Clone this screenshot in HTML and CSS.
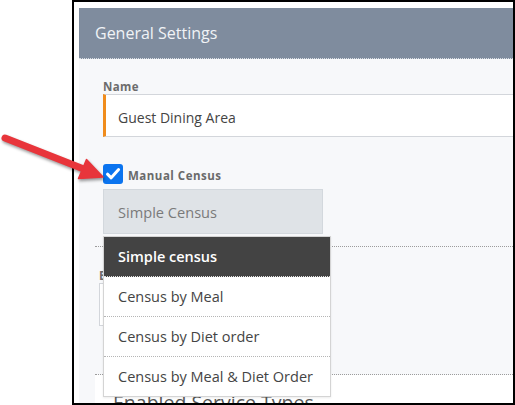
FILE: index.html
```html
<!DOCTYPE html>
<html>
<head>
<meta charset="utf-8">
<link rel="stylesheet" href="styles.css">
</head>
<body>
<div class="frame">
  <div class="header">General Settings</div>
  <div class="panel">
    <div class="sec sec1">
      <div class="label">Name</div>
      <div class="input">Guest Dining Area</div>
      <div class="check-row">
        <span class="checkbox"><svg width="20" height="20" viewBox="0 0 20 20"><path d="M4.5 10.2 L8.2 13.8 L15.6 5.6" fill="none" stroke="#fff" stroke-width="3" stroke-linecap="round" stroke-linejoin="round"/></svg></span>
        <span class="check-label">Manual Census</span>
      </div>
      <div class="select-wrap">
        <div class="select">Simple Census</div>
        <ul class="menu">
          <li class="active">Simple census</li>
          <li>Census by Meal</li>
          <li>Census by Diet order</li>
          <li>Census by Meal &amp; Diet Order</li>
        </ul>
      </div>
    </div>
    <div class="sec sec2">
      <div class="label">Base Census Type</div>
      <div class="input2"></div>
    </div>
    <div class="sec sec3">Enabled Service Types</div>
  </div>
</div>
<svg class="arrow" width="115" height="70" viewBox="0 125 115 70">
  <g fill="#e8353b" stroke="#e8353b">
    <line x1="5" y1="138" x2="85" y2="169.5" stroke-width="7" stroke-linecap="round"/>
    <polygon points="103,177 86.5,159.5 78.5,178.5" stroke-width="1.5" stroke-linejoin="round"/>
  </g>
</svg>
</body>
</html>
```
FILE: styles.css
```css
body {
  margin: 0;
  width: 515px;
  height: 405px;
  overflow: hidden;
  position: relative;
  background: #fff;
  font-family: "Open Sans", "Noto Sans", sans-serif;
}

.frame {
  margin-left: 72px;
  width: 443px;
  height: 405px;
  box-sizing: border-box;
  border: 2px solid #000;
  padding: 6px 0 0 5px;
  background: #fff;
  overflow: hidden;
}

.header {
  height: 50px;
  background: #7f8c9e;
  border-bottom: 1px dotted #d8dde3;
  padding-left: 16px;
  display: flex;
  align-items: center;
  color: #f1f3f6;
  font-size: 16px;
}

.panel {
  background: #f7f8fa;
  padding-left: 16px;
  height: 400px;
}

.sec1 {
  padding: 21px 0 12px 8px;
  border-bottom: 1px dotted #9c9c9c;
}

.label {
  font-size: 11.5px;
  line-height: 13px;
  font-weight: 700;
  color: #6c6c6c;
  letter-spacing: 0.4px;
}

.input {
  margin-top: 1px;
  box-sizing: content-box;
  background: #fff;
  border-top: 1px solid #d3d6db;
  border-bottom: 1px solid #d3d6db;
  border-left: 3px solid #f08c1c;
  padding-left: 12px;
  display: flex;
  align-items: center;
  font-size: 14px;
  padding-top: 3px;
  height: 38px;
  color: #444;
}

.check-row {
  margin-top: 27px;
  height: 20px;
  display: flex;
  align-items: center;
  gap: 5px;
}

.checkbox {
  width: 20px;
  height: 20px;
  background: #0b74ef;
  border-radius: 3px;
  display: block;
}

.checkbox svg { display: block; }

.check-label {
  font-size: 11.5px;
  font-weight: 700;
  color: #6a6a6a;
  letter-spacing: 0.5px;
  padding-top: 3px;
}

.select-wrap {
  position: relative;
  margin-top: 5px;
  width: 220px;
}

.select {
  height: 42px;
  padding-top: 1px;
  box-sizing: content-box;
  background: #dfe3e7;
  border: 1px solid #d3d8dd;
  padding-left: 14px;
  display: flex;
  align-items: center;
  font-size: 14.6px;
  color: #7a7a7a;
}

.menu {
  position: absolute;
  z-index: 5;
  left: 0;
  top: calc(100% + 2px);
  width: 226px;
  margin: 0;
  padding: 0;
  list-style: none;
  background: #fff;
  border: 1px solid #d4d4d4;
  box-shadow: 0 1px 2px rgba(0, 0, 0, 0.08);
}

.menu li {
  height: 39px;
  border-bottom: 1px dotted #b5b5b5;
  padding-left: 14px;
  display: flex;
  align-items: center;
  font-size: 14.5px;
  color: #444;
}

.menu li:last-child { border-bottom: none; }

.menu li.active {
  background: #434343;
  color: #fff;
  font-weight: 600;
  border-bottom-color: #e0e0e0;
}

.sec2 {
  padding: 22px 0 48px 4px;
  border-bottom: 1px dotted #9c9c9c;
}

.sec2 .label { margin-bottom: 1px; }

.input2 {
  height: 41px;
  width: 220px;
  background: #fff;
  border: 1px solid #d3d6db;
}

.sec3 {
  background: #fff;
  padding: 14px 0 0 18px;
  font-size: 19.5px;
  color: #555;
  height: 60px;
}

.arrow {
  position: absolute;
  left: 0;
  top: 125px;
  filter: drop-shadow(1px 2px 1.5px rgba(0, 0, 0, 0.4));
}
```
